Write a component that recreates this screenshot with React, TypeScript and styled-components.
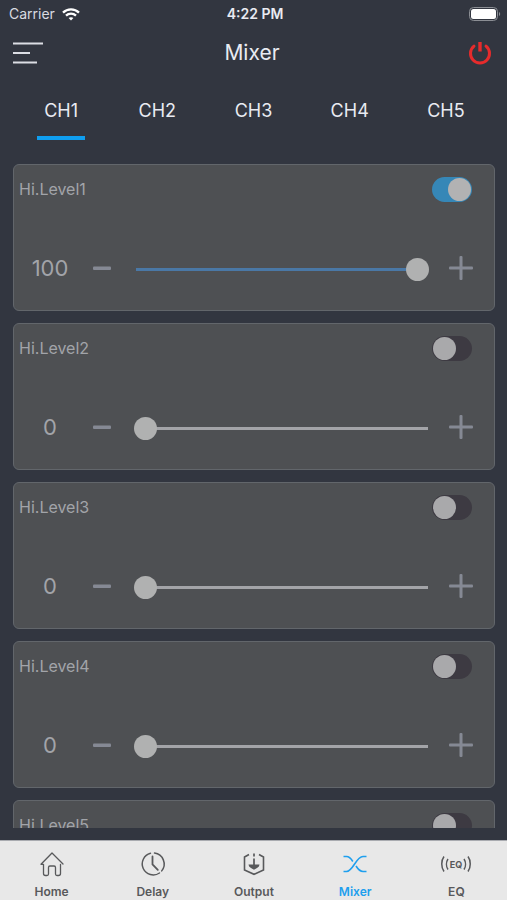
import React, { useState } from "react";
import styled, { createGlobalStyle } from "styled-components";

const GlobalStyle = createGlobalStyle`
  *, *::before, *::after { box-sizing: border-box; }
  body {
    margin: 0;
    background: #323640;
    font-family: Inter, "Liberation Sans", sans-serif;
  }
  button, input { font: inherit; margin: 0; }
`;

const Screen = styled.div`
  display: flex;
  flex-direction: column;
  height: 100vh;
  background: #323640;
  color: #e9ebf2;
`;

const StatusBar = styled.div`
  display: grid;
  grid-template-columns: 1fr auto 1fr;
  align-items: center;
  height: 28px;
  padding: 0 6px 0 9px;
  font-size: 14px;
  line-height: 20px;
`;

const Carrier = styled.span`
  display: flex;
  align-items: center;
  gap: 7px;
  color: #d9dbe0;
`;

const Clock = styled.time`
  font-weight: 600;
`;

const BatterySlot = styled.span`
  display: flex;
  justify-content: flex-end;
`;

const Header = styled.header`
  display: grid;
  grid-template-columns: 1fr auto 1fr;
  align-items: center;
  height: 50px;
  padding: 0 15px 0 12px;
`;

const Title = styled.h1`
  margin: 0;
  font-size: 21px;
  line-height: 28px;
  font-weight: 400;
`;

const IconButton = styled.button<{ $end?: boolean }>`
  display: flex;
  justify-self: ${(p) => (p.$end ? "end" : "start")};
  padding: 0;
  border: 0;
  background: none;
  cursor: pointer;
`;

const Channels = styled.div`
  display: grid;
  grid-template-columns: repeat(5, 1fr);
  height: 62px;
  padding: 0 13px;
`;

const Channel = styled.button<{ $active: boolean }>`
  display: flex;
  flex-direction: column;
  align-items: center;
  justify-content: flex-end;
  padding: 0;
  border: 0;
  background: none;
  color: #e9ebf2;
  font-size: 18px;
  line-height: 24px;
  cursor: pointer;

  &::after {
    content: "";
    width: 50%;
    height: 4px;
    margin-top: 13px;
    background: ${(p) => (p.$active ? "#0f9ef0" : "transparent")};
  }
`;

const LevelList = styled.main`
  flex: 1;
  min-height: 0;
  display: flex;
  flex-direction: column;
  gap: 12px;
  margin: 24px 12px 12px 13px;
  overflow-y: auto;
  scrollbar-width: none;
`;

const Card = styled.section`
  flex: none;
  height: 147px;
  padding-top: 11px;
  border: 1px solid #62666b;
  border-radius: 6px;
  background: #4e5053;
  color: #a2a4a9;
`;

const CardHead = styled.div`
  display: flex;
  align-items: center;
  justify-content: space-between;
  height: 26px;
  padding: 0 22px 0 5px;
`;

const LevelName = styled.label`
  font-size: 16px;
  line-height: 20px;
`;

const Switch = styled.input`
  appearance: none;
  display: flex;
  align-items: center;
  width: 40px;
  height: 25px;
  padding: 0 1px;
  border-radius: 13px;
  background: #3d3a42;
  cursor: pointer;

  &::before {
    content: "";
    width: 23px;
    height: 23px;
    border-radius: 50%;
    background: #a9a9ab;
  }

  &:checked {
    justify-content: flex-end;
    background: #3687b7;
  }

  &:checked::before {
    background: #b2b2b3;
  }
`;

const SliderRow = styled.div`
  display: grid;
  grid-template-columns: 62px 42px 1fr 46px;
  align-items: center;
  height: 48px;
  margin-top: 42px;
  padding: 0 10px 0 5px;
`;

const Value = styled.output`
  text-align: center;
  font-size: 22px;
  line-height: 28px;
`;

const StepButton = styled.button`
  display: flex;
  align-items: center;
  justify-content: center;
  height: 44px;
  padding: 0;
  border: 0;
  background: none;
  color: #858994;
  cursor: pointer;
`;

const Range = styled.input<{ $full: boolean }>`
  appearance: none;
  min-width: 0;
  height: 24px;
  margin: 2px 9px 0 11px;
  background: linear-gradient(
      ${(p) => (p.$full ? "#4a78a6, #4a78a6" : "#a3a4a8, #a3a4a8")}
    )
    center / calc(100% - 3px) 3px no-repeat;
  cursor: pointer;

  &::-webkit-slider-thumb {
    appearance: none;
    width: 23px;
    height: 23px;
    border: 0;
    border-radius: 50%;
    background: #b0b1b1;
  }
`;

const TabBar = styled.nav`
  display: grid;
  grid-template-columns: repeat(5, 1fr);
  height: 60px;
  padding-left: 1px;
  border-top: 1px solid #a9abb0;
  background: #e8e8e8;
`;

const TabLink = styled.a<{ $active: boolean }>`
  display: flex;
  flex-direction: column;
  align-items: center;
  padding-top: 9px;
  gap: 6px;
  color: ${(p) => (p.$active ? "#1e9fee" : "#58595b")};
  font-size: 12px;
  line-height: 16px;
  font-weight: 600;
  text-decoration: none;
`;

const WifiIcon = () => (
  <svg width="18" height="13" viewBox="0 0 18 13" fill="none" stroke="#fff" strokeWidth="2.3">
    <path d="M1 4.6C5.4.3 12.6.3 17 4.6" />
    <path d="M4 7.7c2.8-2.7 7.2-2.7 10 0" />
    <path d="M6.6 10.1c1.3-1.3 3.5-1.3 4.8 0L9 12.6z" fill="#fff" stroke="none" />
  </svg>
);

const BatteryIcon = () => (
  <svg width="32" height="14" viewBox="0 0 32 14">
    <rect x="0.5" y="0.5" width="28" height="13" rx="4" fill="none" stroke="#8b8e94" />
    <rect x="2" y="2" width="25" height="10" rx="2.5" fill="#fff" />
    <path d="M30 5c1.6.6 1.6 3.4 0 4z" fill="#8b8e94" />
  </svg>
);

const MenuIcon = () => (
  <svg width="32" height="24" viewBox="0 0 32 24" stroke="#dcdee4" strokeWidth="2.2">
    <path d="M1 2.500h30M1 12h17M1 21.500h24" />
  </svg>
);

const PowerIcon = () => (
  <svg width="24" height="24" viewBox="0 0 24 24" fill="none" stroke="#e62b2c" strokeWidth="3">
    <path d="M6 5.200a9.500 9.500 0 1 0 12 0" strokeLinecap="round" />
    <path d="M12 1v9.500" strokeWidth="3.400" />
  </svg>
);

const MinusIcon = () => (
  <svg width="18" height="24" viewBox="0 0 18 24">
    <rect x="0" y="10.500" width="18" height="3.500" rx="1" fill="currentColor" />
  </svg>
);

const PlusIcon = () => (
  <svg width="24" height="24" viewBox="0 0 24 24">
    <rect x="0" y="10.500" width="24" height="3" rx="1" fill="currentColor" />
    <rect x="10.500" y="0" width="3" height="24" rx="1" fill="currentColor" />
  </svg>
);

const iconProps = {
  height: 28,
  viewBox: "0 0 28 28",
  fill: "none",
  stroke: "currentColor",
};

const HomeIcon = () => (
  <svg {...iconProps} width="28" strokeWidth="1.3" strokeLinejoin="round" strokeLinecap="round">
    <path d="M5.500 14.300V23.500q0 2 2 2h1.500q1.500 0 1.500-1.500v-6.500q0-1.500 1.500-1.500h4q1.500 0 1.500 1.500v6.500q0 1.500 1.500 1.500h1.500q2 0 2-2v-9.200M5.500 14.300H3L14 3l11 11" />
  </svg>
);

const DelayIcon = () => (
  <svg {...iconProps} width="28" strokeWidth="1.500" strokeLinecap="round">
    <path d="M11.500 3.300a11 11 0 1 0 9 19.700M15.500 3.100a11 11 0 0 1 7.200 17.800" />
    <path d="M13.500 6.500v8l5.300 5.400" strokeWidth="1.800" />
  </svg>
);

const OutputIcon = () => (
  <svg {...iconProps} width="28" strokeWidth="1.600">
    <path d="M9 4.500L4.500 7v13L14 24.300 23.500 20V7L19 4.500" />
    <path d="M14 3.500v3M14 8.500v7" strokeWidth="1.700" />
    <path d="M8.500 14.500h11q0 2-2.500 3.500L14 19.800 11 18q-2.500-1.500-2.500-3.500z" fill="currentColor" stroke="none" />
  </svg>
);

const MixerIcon = () => (
  <svg {...iconProps} width="28" strokeWidth="1.600">
    <path d="M2.500 6.500h3c2.500 0 4.500 2 6.300 5M15 16c1.900 3 4 5.500 7 5.500h3.500" />
    <path d="M2.500 21.500h3C12 21.500 15 6.500 22 6.500h3.500" />
  </svg>
);

const EqIcon = () => (
  <svg height="28" width="32" viewBox="0 0 32 28" fill="none" stroke="currentColor" strokeWidth="1.500">
    <path d="M4 6.500c-3 4-3 11 0 15M8 9c-2 3-2 7.500 0 10.500M28 6.500c3 4 3 11 0 15M24 9c2 3 2 7.500 0 10.500" />
    <text x="16" y="17.500" textAnchor="middle" fontSize="9" fontWeight="700" fill="currentColor" stroke="none">
      EQ
    </text>
  </svg>
);

const channels = ["CH1", "CH2", "CH3", "CH4", "CH5"];

const tabs = [
  { name: "Home", Icon: HomeIcon },
  { name: "Delay", Icon: DelayIcon },
  { name: "Output", Icon: OutputIcon },
  { name: "Mixer", Icon: MixerIcon },
  { name: "EQ", Icon: EqIcon },
];

const initialLevels = [
  { name: "Hi.Level1", on: true, value: 100 },
  { name: "Hi.Level2", on: false, value: 0 },
  { name: "Hi.Level3", on: false, value: 0 },
  { name: "Hi.Level4", on: false, value: 0 },
  { name: "Hi.Level5", on: false, value: 0 },
];

type Level = (typeof initialLevels)[number];

function LevelCard({ level, onChange }: { level: Level; onChange: (l: Level) => void }) {
  const id = level.name.replace(".", "-");
  const setValue = (v: number) =>
    onChange({ ...level, value: Math.max(0, Math.min(100, v)) });
  return (
    <Card>
      <CardHead>
        <LevelName htmlFor={id}>{level.name}</LevelName>
        <Switch
          id={id}
          type="checkbox"
          role="switch"
          checked={level.on}
          onChange={(e) => onChange({ ...level, on: e.target.checked })}
        />
      </CardHead>
      <SliderRow>
        <Value>{level.value}</Value>
        <StepButton aria-label={`Lower ${level.name}`} onClick={() => setValue(level.value - 1)}>
          <MinusIcon />
        </StepButton>
        <Range
          type="range"
          min={0}
          max={100}
          aria-label={`${level.name} value`}
          value={level.value}
          $full={level.value > 0}
          onChange={(e) => setValue(Number(e.target.value))}
        />
        <StepButton aria-label={`Raise ${level.name}`} onClick={() => setValue(level.value + 1)}>
          <PlusIcon />
        </StepButton>
      </SliderRow>
    </Card>
  );
}

export default function App() {
  const [channel, setChannel] = useState("CH1");
  const [levels, setLevels] = useState(initialLevels);
  return (
    <Screen>
      <GlobalStyle />
      <StatusBar>
        <Carrier>
          Carrier <WifiIcon />
        </Carrier>
        <Clock>4:22 PM</Clock>
        <BatterySlot>
          <BatteryIcon />
        </BatterySlot>
      </StatusBar>
      <Header>
        <IconButton aria-label="Menu">
          <MenuIcon />
        </IconButton>
        <Title>Mixer</Title>
        <IconButton $end aria-label="Power">
          <PowerIcon />
        </IconButton>
      </Header>
      <Channels role="tablist">
        {channels.map((c) => (
          <Channel
            key={c}
            role="tab"
            aria-selected={c === channel}
            $active={c === channel}
            onClick={() => setChannel(c)}
          >
            {c}
          </Channel>
        ))}
      </Channels>
      <LevelList>
        {levels.map((level, i) => (
          <LevelCard
            key={level.name}
            level={level}
            onChange={(next) => setLevels(levels.map((l, j) => (j === i ? next : l)))}
          />
        ))}
      </LevelList>
      <TabBar>
        {tabs.map(({ name, Icon }) => (
          <TabLink key={name} href={`#${name.toLowerCase()}`} $active={name === "Mixer"}>
            <Icon />
            {name}
          </TabLink>
        ))}
      </TabBar>
    </Screen>
  );
}
